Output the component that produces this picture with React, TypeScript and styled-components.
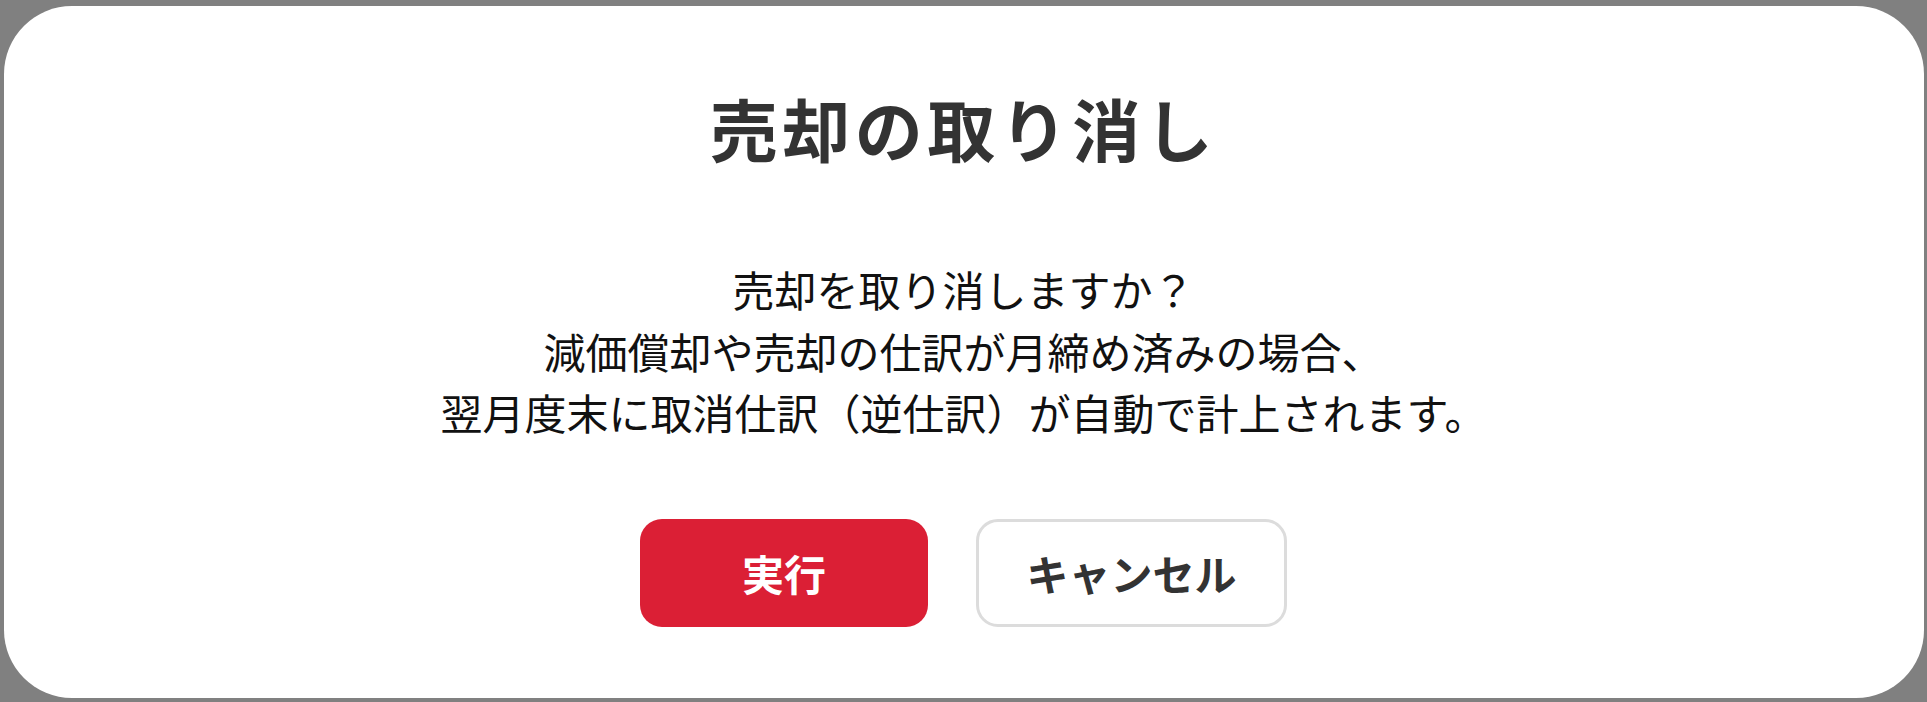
import React from "react";
import styled, { createGlobalStyle } from "styled-components";

const GlobalStyle = createGlobalStyle`
  html, body {
    margin: 0;
    padding: 0;
    background: #808080;
  }
  body {
    font-family: "Noto Sans CJK JP", "Noto Sans", sans-serif;
  }
`;

const Backdrop = styled.div`
  width: 1927px;
  height: 702px;
  background: #808080;
  display: flex;
  justify-content: center;
  padding-top: 6px;
  box-sizing: border-box;
`;

const DialogBox = styled.div`
  width: 1920px;
  height: 692px;
  box-sizing: border-box;
  background: #fff;
  border-radius: 68px;
  display: flex;
  flex-direction: column;
  align-items: center;
  padding: 72px 40px 0;
`;

const Title = styled.h2`
  margin: 0;
  font-size: 68px;
  line-height: 100px;
  font-weight: 700;
  color: #333;
  letter-spacing: 4.5px;
`;

const Message = styled.p`
  margin: 80px 0 0;
  font-size: 42px;
  line-height: 61.5px;
  font-weight: 400;
  color: #111;
  text-align: center;
`;

const ButtonRow = styled.div`
  display: flex;
  gap: 48px;
  margin-top: 76px;
`;

const ActionButton = styled.button<{ $primary?: boolean; $width: number }>`
  width: ${(p) => p.$width}px;
  height: 108px;
  box-sizing: border-box;
  border-radius: 22px;
  font-family: inherit;
  font-size: 42px;
  font-weight: 700;
  cursor: pointer;
  background: ${(p) => (p.$primary ? "#db1f35" : "#fff")};
  color: ${(p) => (p.$primary ? "#fff" : "#333")};
  border: ${(p) => (p.$primary ? "none" : "3px solid #dcdcdc")};
`;

const App = () => {
    return (
        <>
            <GlobalStyle />
            <Backdrop>
                <DialogBox>
                    <Title>売却の取り消し</Title>
                    <Message>
                        売却を取り消しますか？<br />
                        減価償却や売却の仕訳が月締め済みの場合、<br />
                        翌月度末に取消仕訳（逆仕訳）が自動で計上されます。
                    </Message>
                    <ButtonRow>
                        <ActionButton $primary $width={288}>実行</ActionButton>
                        <ActionButton $width={311}>キャンセル</ActionButton>
                    </ButtonRow>
                </DialogBox>
            </Backdrop>
        </>
    );
};

export default App;
